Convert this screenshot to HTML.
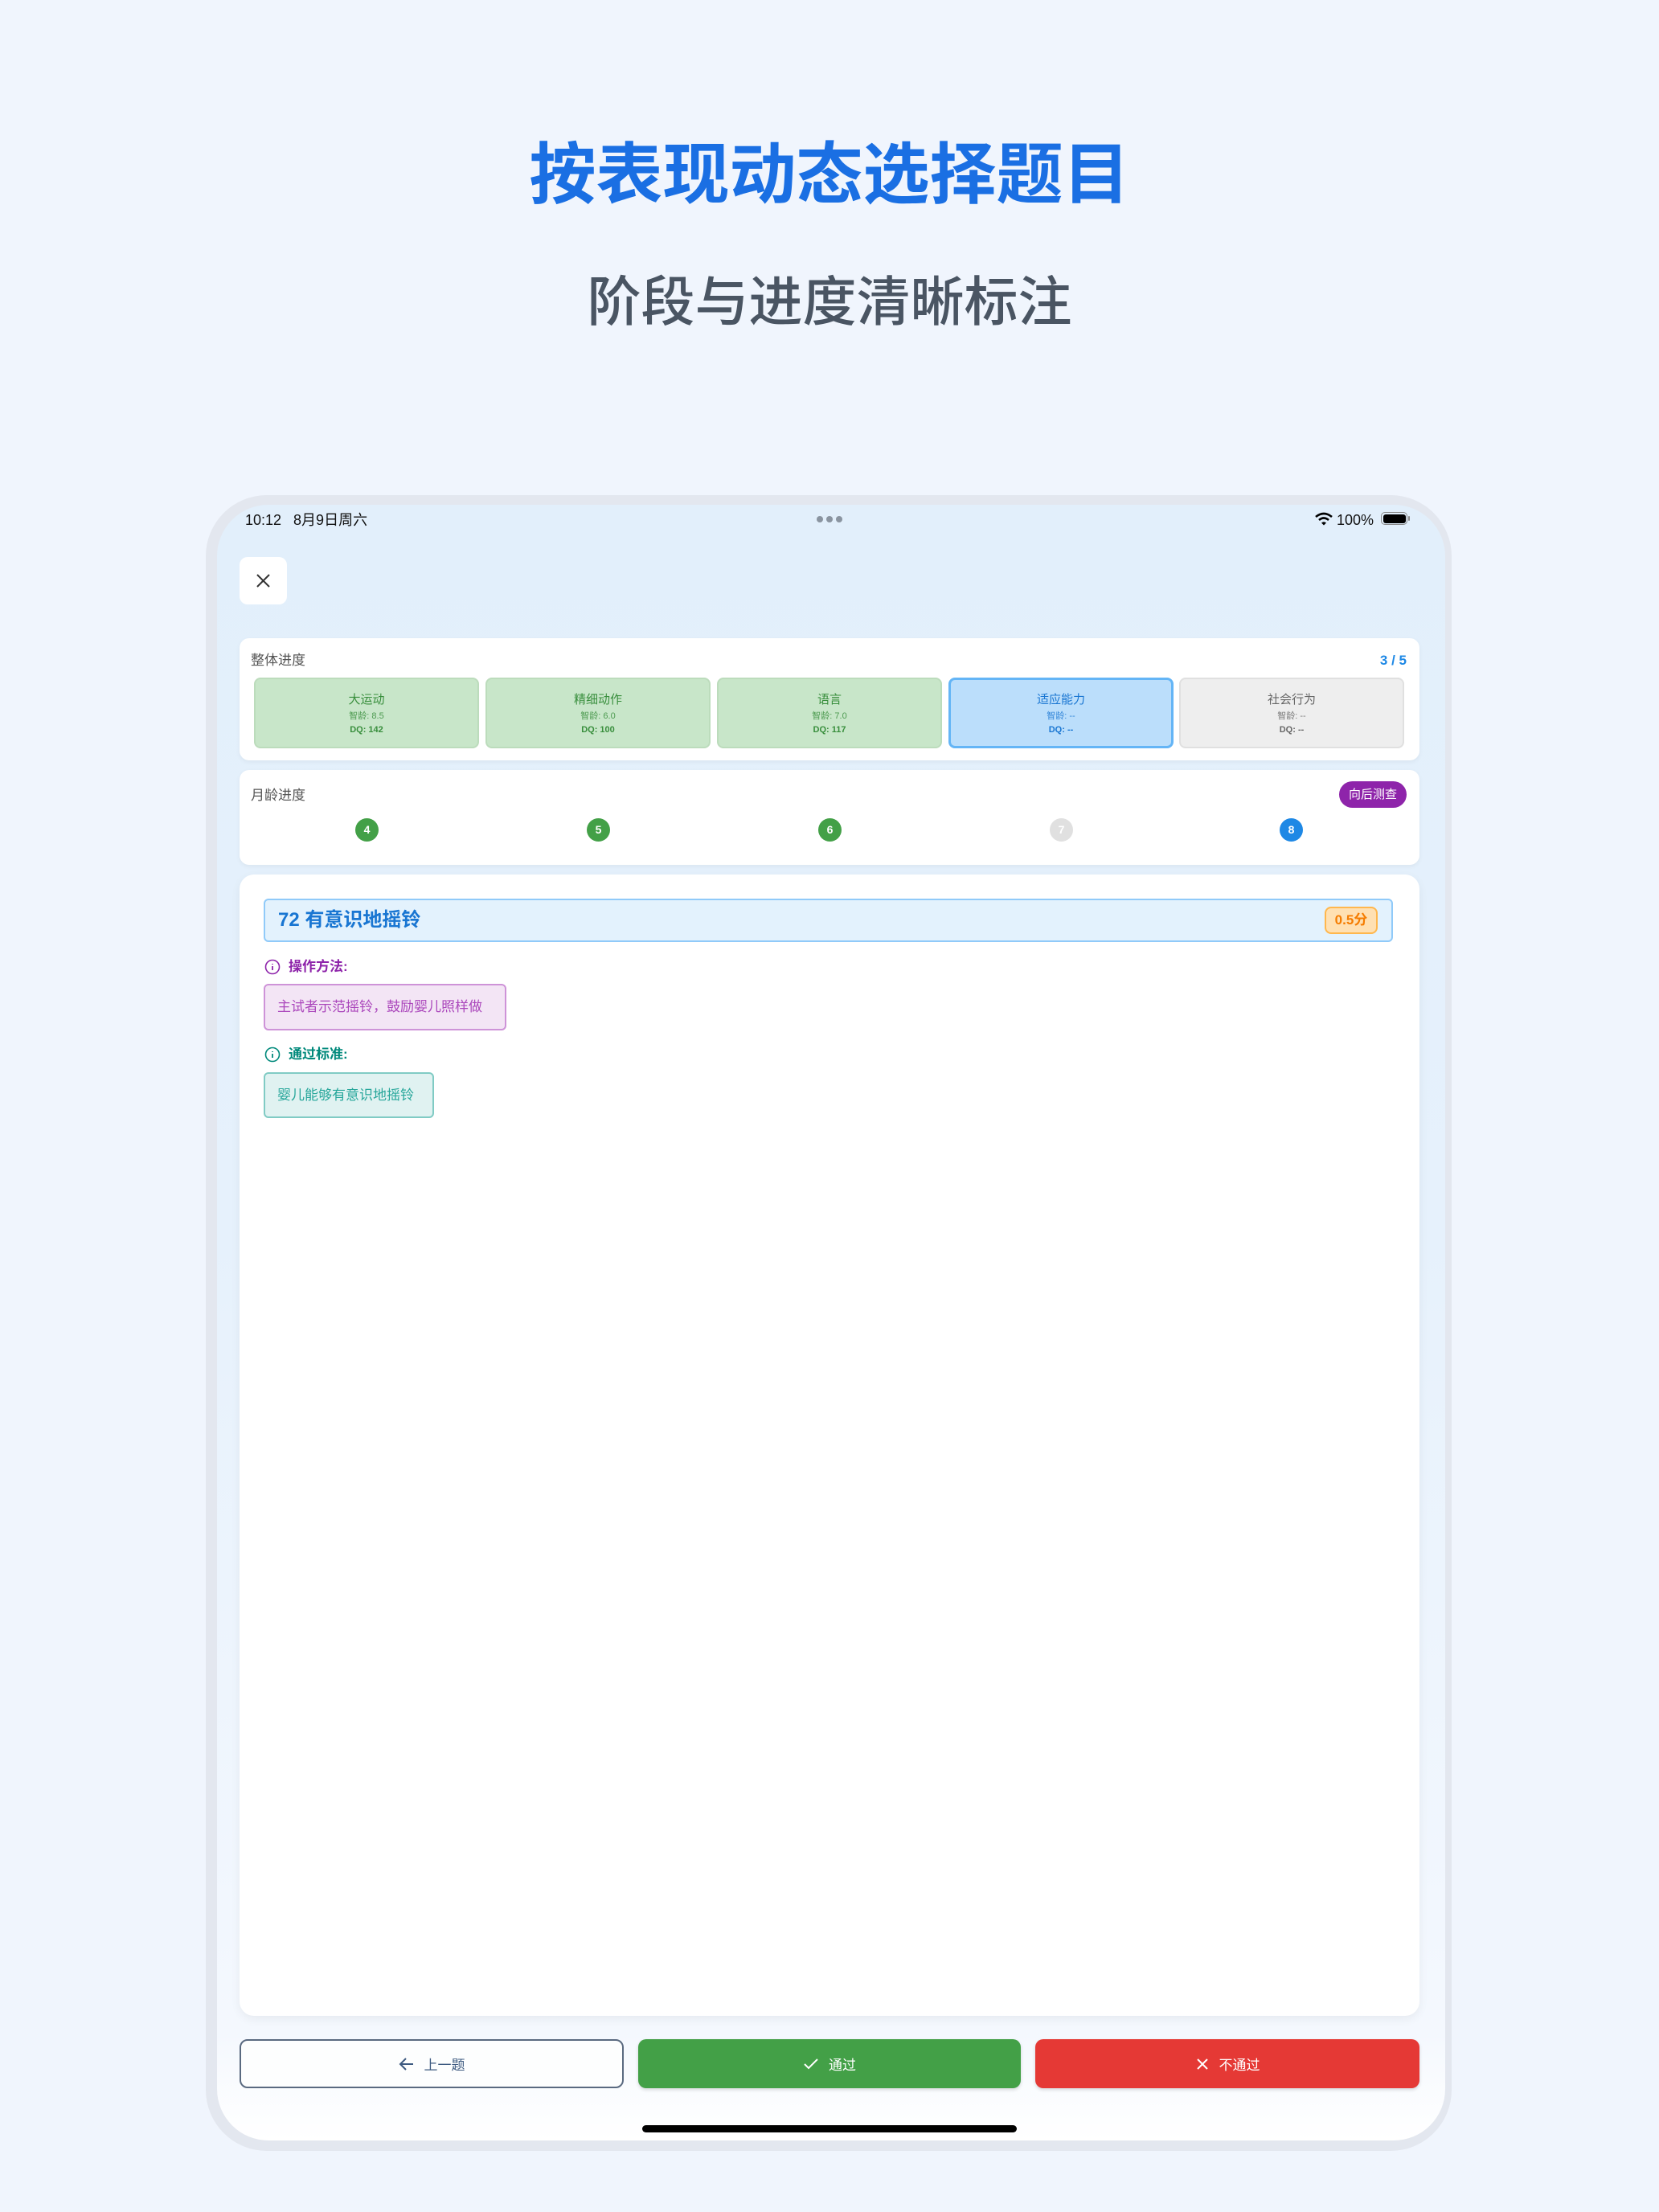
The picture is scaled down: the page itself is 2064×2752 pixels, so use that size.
<!DOCTYPE html>
<html><head><meta charset="utf-8"><style>
*{margin:0;padding:0;box-sizing:border-box}
body{width:2064px;height:2752px;background:#f0f5fd;font-family:"Liberation Sans","Noto Sans CJK SC",sans-serif;position:relative;overflow:hidden}
.abs{position:absolute}
.t1{left:0;width:2064px;text-align:center;top:170px;font-size:83px;line-height:96px;font-weight:700;color:#1a6fe3}
.t2{left:0;width:2064px;text-align:center;top:337px;font-size:67px;line-height:80px;font-weight:500;color:#4a5563}
.frame{left:256px;top:616px;width:1550px;height:2060px;border-radius:76px;background:#e3e7ef}
.screen{left:270px;top:628px;width:1528px;height:2035px;border-radius:64px;background:linear-gradient(#e2effb 0px,#e6f1fc 900px,#f4f8fe 1900px,#ffffff 2035px);overflow:hidden}
.card{background:#fff;border-radius:12px;box-shadow:0 2px 6px rgba(0,0,0,.05)}
.tile{position:absolute;top:843px;width:280px;height:88px;border-radius:8px;text-align:center;border:2px solid #dde7dd}
.tile .n{font-size:15px;margin-top:16px;line-height:20px}
.tile .s{font-size:11px;margin-top:3px;line-height:14px;opacity:.85}
.tile .d{font-size:11px;line-height:14px;margin-top:3px;font-weight:700}
.g{background:#c8e6c9;color:#388e3c;border-color:#bcdcbc}
.circ{position:absolute;top:1018px;width:29px;height:29px;border-radius:50%;color:#fff;font-size:14px;font-weight:700;text-align:center;line-height:29px}
.btn{position:absolute;top:2537px;height:61px;border-radius:10px;font-size:17px;display:flex;align-items:center;justify-content:center;gap:12px}
</style></head><body>
<div class="abs t1">按表现动态选择题目</div>
<div class="abs t2">阶段与进度清晰标注</div>
<div class="abs frame"></div>
<div class="abs screen"></div>

<div class="abs" style="left:305px;top:635px;font-size:18px;line-height:24px;color:#111">10:12&nbsp;&nbsp;&nbsp;8月9日周六</div>
<div class="abs" style="left:1016px;top:642px;width:32px;height:8px;display:flex;justify-content:space-between"><i style="width:8px;height:8px;border-radius:50%;background:#8a94a0"></i><i style="width:8px;height:8px;border-radius:50%;background:#8a94a0"></i><i style="width:8px;height:8px;border-radius:50%;background:#8a94a0"></i></div>
<svg class="abs" style="left:1635px;top:637px" width="24" height="17" viewBox="0 0 24 17"><path d="M2 6 Q12 -2 22 6" stroke="#000" stroke-width="2.6" fill="none"/><path d="M6 10 Q12 5 18 10" stroke="#000" stroke-width="2.6" fill="none"/><path d="M9 13.5 L12 16.5 L15 13.5 Q12 11 9 13.5Z" fill="#000"/></svg>
<div class="abs" style="left:1663px;top:635px;font-size:18px;line-height:24px;color:#111">100%</div>
<div class="abs" style="left:1718px;top:637px;width:33px;height:16px;border:1.5px solid #888;border-radius:5px;padding:1.5px"><div style="width:100%;height:100%;background:#000;border-radius:3px"></div></div>
<div class="abs" style="left:1752px;top:642px;width:2px;height:6px;background:#888;border-radius:1px"></div>

<div class="abs card" style="left:298px;top:693px;width:59px;height:59px;border-radius:10px;box-shadow:none"></div>
<svg class="abs" style="left:317px;top:712px" width="21" height="21" viewBox="0 0 21 21"><path d="M3 3L18 18M18 3L3 18" stroke="#333" stroke-width="2"/></svg>

<div class="abs card" style="left:298px;top:794px;width:1468px;height:152px"></div>
<div class="abs" style="left:312px;top:810px;font-size:17px;line-height:24px;color:#555">整体进度</div>
<div class="abs" style="left:1690px;top:810px;width:60px;text-align:right;font-size:17px;line-height:24px;color:#1e88e5;font-weight:700">3 / 5</div>
<div class="tile g" style="left:316px"><div class="n">大运动</div><div class="s">智龄: 8.5</div><div class="d">DQ: 142</div></div>
<div class="tile g" style="left:604px"><div class="n">精细动作</div><div class="s">智龄: 6.0</div><div class="d">DQ: 100</div></div>
<div class="tile g" style="left:892px"><div class="n">语言</div><div class="s">智龄: 7.0</div><div class="d">DQ: 117</div></div>
<div class="tile" style="left:1180px;background:#bbdefb;color:#1976d2;border:3px solid #64b5f6"><div class="n" style="margin-top:15px">适应能力</div><div class="s">智龄: --</div><div class="d">DQ: --</div></div>
<div class="tile" style="left:1467px;background:#eeeeee;color:#666;border-color:#e0e0e0"><div class="n">社会行为</div><div class="s">智龄: --</div><div class="d">DQ: --</div></div>

<div class="abs card" style="left:298px;top:958px;width:1468px;height:118px"></div>
<div class="abs" style="left:312px;top:978px;font-size:17px;line-height:24px;color:#555">月龄进度</div>
<div class="abs" style="left:1666px;top:972px;width:84px;height:33px;border-radius:17px;background:#8e24aa;color:#fff;font-size:15px;line-height:33px;text-align:center">向后测查</div>
<div class="circ" style="left:442px;background:#43a047">4</div>
<div class="circ" style="left:730px;background:#43a047">5</div>
<div class="circ" style="left:1018px;background:#43a047">6</div>
<div class="circ" style="left:1306px;background:#e0e0e0">7</div>
<div class="circ" style="left:1592px;background:#1e88e5">8</div>

<div class="abs card" style="left:298px;top:1088px;width:1468px;height:1420px;border-radius:18px;box-shadow:0 4px 12px rgba(0,0,0,.06)"></div>
<div class="abs" style="left:328px;top:1118px;width:1405px;height:54px;background:#e3f2fd;border:2px solid #90caf9;border-radius:6px"></div>
<div class="abs" style="left:346px;top:1128px;font-size:24px;line-height:34px;font-weight:700;color:#1976d2">72 有意识地摇铃</div>
<div class="abs" style="left:1648px;top:1128px;width:66px;height:34px;background:#ffe0b2;border:2px solid #ffb74d;border-radius:8px;color:#f57c00;font-size:17px;font-weight:700;line-height:30px;text-align:center">0.5分</div>

<svg class="abs" style="left:329px;top:1193px" width="20" height="20" viewBox="0 0 20 20"><circle cx="10" cy="10" r="8.5" stroke="#8e24aa" stroke-width="1.6" fill="none"/><path d="M10 9v5M10 6v1" stroke="#8e24aa" stroke-width="1.8"/></svg>
<div class="abs" style="left:359px;top:1191px;font-size:17px;line-height:24px;font-weight:700;color:#8e24aa">操作方法:</div>
<div class="abs" style="left:328px;top:1224px;width:302px;height:58px;background:#f3e5f5;border:2px solid #ce93d8;border-radius:6px;color:#ab47bc;font-size:17px;line-height:54px;padding-left:15px">主试者示范摇铃，鼓励婴儿照样做</div>

<svg class="abs" style="left:329px;top:1302px" width="20" height="20" viewBox="0 0 20 20"><circle cx="10" cy="10" r="8.5" stroke="#00897b" stroke-width="1.6" fill="none"/><path d="M10 9v5M10 6v1" stroke="#00897b" stroke-width="1.8"/></svg>
<div class="abs" style="left:359px;top:1300px;font-size:17px;line-height:24px;font-weight:700;color:#00897b">通过标准:</div>
<div class="abs" style="left:328px;top:1334px;width:212px;height:57px;background:#e0f2f1;border:2px solid #80cbc4;border-radius:6px;color:#26a69a;font-size:17px;line-height:53px;padding-left:15px">婴儿能够有意识地摇铃</div>

<div class="btn" style="left:298px;width:478px;border:2px solid #5a6a80;background:#fdfefe;color:#3d5a80"><svg width="20" height="18" viewBox="0 0 20 18"><path d="M18 9H3M9 2L2 9l7 7" stroke="#3d5a80" stroke-width="2" fill="none"/></svg>上一题</div>
<div class="btn" style="left:794px;width:476px;background:#43a047;color:#fff;box-shadow:0 2px 4px rgba(0,0,0,.15)"><svg width="20" height="18" viewBox="0 0 20 18"><path d="M2 9l5 5L18 3" stroke="#fff" stroke-width="2" fill="none"/></svg>通过</div>
<div class="btn" style="left:1288px;width:478px;background:#e53935;color:#fff;box-shadow:0 2px 4px rgba(0,0,0,.15)"><svg width="18" height="18" viewBox="0 0 18 18"><path d="M3 3L15 15M15 3L3 15" stroke="#fff" stroke-width="2"/></svg>不通过</div>

<div class="abs" style="left:799px;top:2644px;width:466px;height:9px;border-radius:5px;background:#000"></div>
</body></html>
